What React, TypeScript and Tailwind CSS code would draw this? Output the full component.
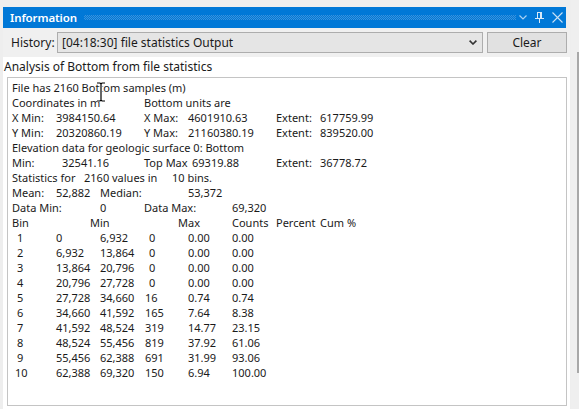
import React from "react";

type Cell = { col: number; text: string; pad?: string };

const colStart: Record<number, string> = {
  1: "col-start-1",
  2: "col-start-2",
  3: "col-start-3",
  4: "col-start-4",
  5: "col-start-5",
  6: "col-start-6",
  7: "col-start-7",
  8: "col-start-8",
  9: "col-start-9",
};

const bins: [string, string, string, string, string, string][] = [
  ["1", "0", "6,932", "0", "0.00", "0.00"],
  ["2", "6,932", "13,864", "0", "0.00", "0.00"],
  ["3", "13,864", "20,796", "0", "0.00", "0.00"],
  ["4", "20,796", "27,728", "0", "0.00", "0.00"],
  ["5", "27,728", "34,660", "16", "0.74", "0.74"],
  ["6", "34,660", "41,592", "165", "7.64", "8.38"],
  ["7", "41,592", "48,524", "319", "14.77", "23.15"],
  ["8", "48,524", "55,456", "819", "37.92", "61.06"],
  ["9", "55,456", "62,388", "691", "31.99", "93.06"],
  ["10", "62,388", "69,320", "150", "6.94", "100.00"],
];

const lines: Cell[][] = [
  [{ col: 1, text: "File has 2160 Bottom samples (m)" }],
  [
    { col: 1, text: "Coordinates in m" },
    { col: 4, text: "Bottom units are" },
  ],
  [
    { col: 1, text: "X Min:" },
    { col: 2, text: "3984150.64" },
    { col: 4, text: "X Max:" },
    { col: 5, text: "4601910.63" },
    { col: 7, text: "Extent:" },
    { col: 8, text: "617759.99" },
  ],
  [
    { col: 1, text: "Y Min:" },
    { col: 2, text: "20320860.19" },
    { col: 4, text: "Y Max:" },
    { col: 5, text: "21160380.19" },
    { col: 7, text: "Extent:" },
    { col: 8, text: "839520.00" },
  ],
  [{ col: 1, text: "Elevation data for geologic surface 0: Bottom" }],
  [
    { col: 1, text: "Min:" },
    { col: 2, text: "32541.16", pad: "pl-[6px]" },
    { col: 4, text: "Top Max" },
    { col: 5, text: "69319.88", pad: "pl-[4px]" },
    { col: 7, text: "Extent:" },
    { col: 8, text: "36778.72" },
  ],
  [
    { col: 1, text: "Statistics for" },
    { col: 2, text: "2160", pad: "pl-[28px]" },
    { col: 3, text: "values in", pad: "pl-[12px]" },
    { col: 4, text: "10 bins.", pad: "pl-[28px]" },
  ],
  [
    { col: 1, text: "Mean:" },
    { col: 2, text: "52,882" },
    { col: 3, text: "Median:" },
    { col: 5, text: "53,372" },
  ],
  [
    { col: 1, text: "Data Min:" },
    { col: 3, text: "0" },
    { col: 4, text: "Data Max:" },
    { col: 6, text: "69,320" },
  ],
  [
    { col: 1, text: "Bin" },
    { col: 2, text: "Min", pad: "pl-[34px]" },
    { col: 4, text: "Max", pad: "pl-[34px]" },
    { col: 6, text: "Counts" },
    { col: 7, text: "Percent" },
    { col: 8, text: "Cum %" },
  ],
  ...bins.map((b) => [
    { col: 1, text: b[0], pad: b[0].length > 1 ? "pl-[3px]" : "pl-[5px]" },
    { col: 2, text: b[1] },
    { col: 3, text: b[2] },
    { col: 4, text: b[3], pad: b[3] === "0" ? "pl-[5px]" : "pl-[1px]" },
    { col: 5, text: b[4] },
    { col: 6, text: b[5] },
  ]),
];

function PinIcon() {
  return (
    <svg width="9" height="11" viewBox="0 0 9 11" fill="none" stroke="#d6e9f8" strokeWidth="1">
      <rect x="2.5" y="0.5" width="4" height="6" />
      <line x1="5.5" y1="1" x2="5.5" y2="6" />
      <line x1="0" y1="6.5" x2="9" y2="6.5" />
      <line x1="4.5" y1="7" x2="4.5" y2="11" />
    </svg>
  );
}

// mouse pointer (I-beam) sitting over the text
function IBeam() {
  return (
    <svg
      className="pointer-events-none absolute left-[88px] top-[4px]"
      width="10"
      height="20"
      viewBox="0 0 10 20"
    >
      <path
        d="M1 1 H4 L5 2 L6 1 H9 M5 2 V18 M1 19 H4 L5 18 L6 19 H9"
        fill="none"
        stroke="#fff"
        strokeWidth="3"
      />
      <path
        d="M1 1 H4 L5 2 L6 1 H9 M5 2 V18 M1 19 H4 L5 18 L6 19 H9"
        fill="none"
        stroke="#000"
        strokeWidth="1.2"
      />
    </svg>
  );
}

export default function App() {
  return (
    <div className="flex h-[409px] w-[579px] overflow-hidden bg-[#eeeeee] font-['Noto_Sans',sans-serif] text-[11px] text-[#1a1a1a]">
      {/* panel */}
      <div className="ml-[3px] mt-[7px] flex w-[567px] flex-col">
        {/* title bar */}
        <div className="mr-[4px] flex h-[21px] items-center bg-[#0078d7] pl-[7px] text-white">
          <span className="text-[11.5px] font-semibold leading-none tracking-[-0.1px]">Information</span>
          <div className="ml-[7px] h-[5px] w-[432px] [background-image:conic-gradient(#3b93dc_25%,transparent_0_50%,#3b93dc_0_75%,transparent_0)] [background-size:2px_2px]" />
          <div className="ml-auto flex items-center gap-[8px] pr-[3px]">
            <svg width="8" height="5" viewBox="0 0 8 5" fill="none" stroke="#a9d1f2" strokeWidth="1.2">
              <path d="M0.5 0.5 L4 4 L7.5 0.5" />
            </svg>
            <PinIcon />
            <svg width="11" height="11" viewBox="0 0 11 11" fill="none" stroke="#c9e1f5" strokeWidth="1.1">
              <path d="M0.5 0.5 L10.5 10.5 M10.5 0.5 L0.5 10.5" />
            </svg>
          </div>
        </div>

        {/* history row */}
        <div className="flex h-[29px] items-center bg-[#f0f0f0]">
          <div className="w-[54px] pl-[8px] text-[12px]">History:</div>
          <div className="flex h-[21px] w-[426px] items-center justify-between border border-[#adadad] bg-[#e5e5e5] pl-[4px] pr-[5px] text-[12px]">
            <span>[04:18:30] file statistics Output</span>
            <svg width="8" height="5" viewBox="0 0 8 5" fill="none" stroke="#333" strokeWidth="1.6">
              <path d="M0.6 0.6 L4 4 L7.4 0.6" />
            </svg>
          </div>
          <button className="ml-[4px] flex h-[21px] w-[80px] items-center justify-center border border-[#adadad] bg-[#e1e1e1] text-[12px]">
            Clear
          </button>
        </div>

        {/* output area */}
        <div className="flex flex-1 flex-col bg-white">
          <div className="h-[20px] pl-[1px] pt-[1px] text-[12px] leading-[18px]">
            Analysis of Bottom from file statistics
          </div>
          <div className="relative ml-[4px] h-[329px] w-[560px] border border-[#c4c4c4] pt-[2px]">
            {lines.map((cells, i) => (
              <div key={i} className="grid h-[15px] grid-cols-[4px_repeat(8,44px)] leading-[15px]">
                {cells.map((c, j) => (
                  <span
                    key={j}
                    className={`${colStart[c.col + 1] ?? ""} whitespace-nowrap ${c.pad ?? ""}`}
                  >
                    {c.text}
                  </span>
                ))}
              </div>
            ))}
            <IBeam />
          </div>
        </div>
      </div>

      {/* right edge strip */}
      <div className="ml-[1px] flex flex-1 justify-end bg-[#efefef]">
        <div className="mt-[52px] h-[321px] w-[2px] bg-[#a8a8a8]" />
      </div>
    </div>
  );
}
